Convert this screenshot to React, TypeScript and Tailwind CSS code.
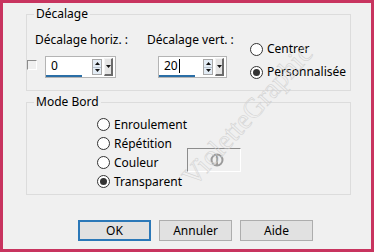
import React from 'react'

const Radio = ({ label, checked = false }: { label: string; checked?: boolean }) => (
  <div className="flex items-center">
    <span className="flex h-[13px] w-[13px] items-center justify-center rounded-full border border-[#333333] bg-white">
      {checked && <span className="h-[7px] w-[7px] rounded-full bg-[#333333]" />}
    </span>
    <span className="ml-[4px]">{label}</span>
  </div>
)

// champ numérique avec flèches + bouton déroulant
const SpinInput = ({ value, width, caret = false }: { value: string; width: string; caret?: boolean }) => (
  <div className={`flex h-[22px] ${width} items-stretch border border-[#b4b4b4] bg-white`}>
    <div className="flex w-[36px] items-center border-b-2 border-[#2a6ea6] pl-[5px]">
      <span>{value}</span>
      {caret && <span className="ml-[1px] h-[14px] w-[1px] bg-black" />}
    </div>
    <div className="ml-auto flex items-center gap-[2px] pr-[2px]">
      <div className="flex h-[16px] w-[10px] flex-col border border-[#a8a8a8] bg-[#e3ecf5]">
        <div className="flex flex-1 items-center justify-center border-b border-[#b8c4d0]">
          <svg width="5" height="3" viewBox="0 0 5 3"><path d="M0 3 L2.5 0 L5 3 Z" fill="#111" /></svg>
        </div>
        <div className="flex flex-1 items-center justify-center">
          <svg width="5" height="3" viewBox="0 0 5 3"><path d="M0 0 L2.5 3 L5 0 Z" fill="#111" /></svg>
        </div>
      </div>
      <div className="flex h-[18px] w-[9px] items-center justify-center border-t border-l border-[#f4f4f4] border-r-2 border-b-2 border-r-[#6b6b6b] border-b-[#6b6b6b] bg-[#e4e4e4]">
        <svg width="5" height="3" viewBox="0 0 5 3"><path d="M0 0 L2.5 3 L5 0 Z" fill="#111" /></svg>
      </div>
    </div>
  </div>
)

const Button = ({ label, primary = false }: { label: string; primary?: boolean }) => (
  <button
    className={`flex h-[21px] w-[73px] items-center justify-center bg-[#e1e1e1] ${
      primary ? 'border-2 border-[#2b78b8]' : 'border border-[#adadad]'
    }`}
  >
    {label}
  </button>
)

export default function App() {
  return (
    <div className="relative h-[252px] w-[374px] overflow-hidden border-[3px] border-[#c8345f] bg-[#f0f0f0] font-['Noto_Sans',sans-serif] text-[12px] leading-[16px] text-black">
      <div className="pl-[23px] pt-[3px]">
        {/* Décalage */}
        <fieldset className="w-[325px] border border-[#dcdcdc]">
          <legend className="ml-[7px] px-[2px]">Décalage</legend>
          <div className="flex h-[68px]">
            <div className="w-[120px] pt-[10px]">
              <div className="pl-[8px]">Décalage horiz. :</div>
              <div className="mt-[8px] flex items-start">
                <span className="mt-[4px] h-[10px] w-[10px] border-t border-l border-[#8c8c8c] border-r border-b border-r-white border-b-white" />
                <div className="ml-[8px]">
                  <SpinInput value="0" width="w-[71px]" />
                </div>
              </div>
            </div>
            <div className="w-[103px] pt-[10px]">
              <div>Décalage vert. :</div>
              <div className="mt-[8px] pl-[11px]">
                <SpinInput value="20" width="w-[69px]" caret />
              </div>
            </div>
            <div className="flex flex-col gap-[7px] pt-[19px]">
              <Radio label="Centrer" />
              <Radio label="Personnalisée" checked />
            </div>
          </div>
        </fieldset>

        {/* Mode Bord */}
        <fieldset className="mt-[3px] w-[325px] border border-[#dcdcdc]">
          <legend className="ml-[7px] px-[2px]">Mode Bord</legend>
          <div className="h-[84px] pl-[70px] pt-[5px]">
            <div className="flex h-[19px] items-center">
              <Radio label="Enroulement" />
            </div>
            <div className="flex h-[19px] items-center">
              <Radio label="Répétition" />
            </div>
            <div className="flex h-[19px] items-center">
              <div className="w-[90px]">
                <Radio label="Couleur" />
              </div>
              <div className="-mt-[5px] flex h-[24px] w-[54px] items-center justify-center self-start border-t border-l border-[#8c8c8c] border-r border-b border-r-white border-b-white pl-[6px]">
                <svg width="14" height="14" viewBox="0 0 14 14">
                  <circle cx="7" cy="7" r="5.5" fill="none" stroke="#9a9a9a" strokeWidth="2" />
                  <path d="M7 1.5 L7 12.5" stroke="#9a9a9a" strokeWidth="2" />
                </svg>
              </div>
            </div>
            <div className="flex h-[19px] items-center">
              <Radio label="Transparent" checked />
            </div>
          </div>
        </fieldset>
      </div>

      <div className="mt-[25px] flex gap-[8px] pl-[75px]">
        <Button label="OK" primary />
        <Button label="Annuler" />
        <Button label="Aide" />
      </div>

      {/* filigrane */}
      <span className="pointer-events-none absolute left-[155px] top-[98px] -rotate-[48deg] whitespace-nowrap font-['Liberation_Serif',serif] text-[28px] leading-[28px] text-transparent [-webkit-text-stroke:0.5px_#cfcfcf]">
        VioletteGraphic
      </span>
    </div>
  )
}
